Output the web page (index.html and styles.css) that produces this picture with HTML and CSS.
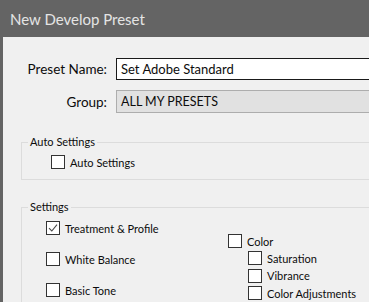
FILE: index.html
```html
<!DOCTYPE html>
<html>
<head>
<meta charset="utf-8">
<link rel="stylesheet" href="styles.css">
</head>
<body>
<div class="window">
  <div class="titlebar">New Develop Preset</div>
  <div class="content">
    <div class="form-grid">
      <label class="form-label">Preset Name:</label>
      <div class="text-input">Set Adobe Standard</div>
      <label class="form-label">Group:</label>
      <div class="select-input">ALL MY PRESETS</div>
    </div>

    <fieldset class="group group-auto">
      <legend class="group-legend">Auto Settings</legend>
      <div class="check-row">
        <span class="check-box"></span><span class="check-text">Auto Settings</span>
      </div>
    </fieldset>

    <fieldset class="group group-settings">
      <legend class="group-legend">Settings</legend>
      <div class="settings-cols">
        <div class="col-left">
          <div class="check-row">
            <span class="check-box checked"><svg viewBox="0 0 14 14" width="14" height="14"><path d="M3 7.2 L5.8 10 L11 3.6" fill="none" stroke="#4a4a4a" stroke-width="1.1"/></svg></span><span class="check-text">Treatment &amp; Profile</span>
          </div>
          <div class="check-row">
            <span class="check-box"></span><span class="check-text">White Balance</span>
          </div>
          <div class="check-row">
            <span class="check-box"></span><span class="check-text">Basic Tone</span>
          </div>
        </div>
        <div class="col-right">
          <div class="check-row">
            <span class="check-box"></span><span class="check-text">Color</span>
          </div>
          <div class="sub-list">
            <div class="check-row">
              <span class="check-box"></span><span class="check-text">Saturation</span>
            </div>
            <div class="check-row">
              <span class="check-box"></span><span class="check-text">Vibrance</span>
            </div>
            <div class="check-row">
              <span class="check-box"></span><span class="check-text">Color Adjustments</span>
            </div>
          </div>
        </div>
      </div>
    </fieldset>
  </div>
</div>
</body>
</html>
```

FILE: styles.css
```css
html, body {
  margin: 0;
  padding: 0;
  width: 369px;
  height: 302px;
  overflow: hidden;
  background: #f0f0f0;
}
body {
  font-family: "Lato", "Open Sans", sans-serif;
  color: #111;
}
.window {
  display: flex;
  flex-direction: column;
  height: 302px;
  overflow: hidden;
  border-left: 3px solid #646464;
  box-sizing: border-box;
}
.titlebar {
  height: 37px;
  background: #646464;
  color: #e4e4e4;
  font-size: 15px;
  line-height: 38px;
  margin-left: -3px;
  padding-left: 10px;
  box-sizing: border-box;
}
.content {
  flex: 1;
  background: #f0f0f0;
  padding-top: 21px;
}
.form-grid {
  display: grid;
  grid-template-columns: 104px 400px;
  column-gap: 9px;
  row-gap: 10px;
  align-items: center;
}
.form-label {
  text-align: right;
  font-size: 13.5px;
  color: #0c0c0c;
}
.text-input {
  height: 22px;
  box-sizing: border-box;
  border: 1px solid #1a1a1a;
  background: #fff;
  font-size: 13px;
  line-height: 20px;
  padding-left: 4px;
  color: #0c0c0c;
}
.select-input {
  height: 23px;
  box-sizing: border-box;
  border: 1px solid #adadad;
  background: #e1e1e1;
  font-size: 12.5px;
  line-height: 21px;
  padding-left: 4px;
  color: #0c0c0c;
}
.group {
  margin: 0 -100px 0 18px;
  padding: 0;
  border: 1px solid #dcdcdc;
  min-width: 0;
}
.group-legend {
  font-size: 11px;
  line-height: 16px;
  padding: 0 2px;
  margin-left: 6px;
  color: #0c0c0c;
}
.group-auto {
  margin-top: 21px;
  padding-bottom: 10px;
}
.group-auto .check-row {
  margin-top: 5px;
  margin-left: 29px;
}
.group-settings {
  margin-top: 19px;
  padding-bottom: 20px;
}
.check-row {
  display: flex;
  align-items: center;
  height: 14px;
  gap: 5px;
}
.check-box {
  width: 14px;
  height: 14px;
  box-sizing: border-box;
  border: 1px solid #333;
  background: #fff;
  flex: none;
  display: block;
}
.check-box svg {
  display: block;
  margin: -1px;
}
.check-text {
  font-size: 11px;
  color: #0c0c0c;
  white-space: nowrap;
}
.settings-cols {
  display: flex;
  padding-top: 6px;
}
.col-left {
  display: flex;
  flex-direction: column;
  gap: 17px;
  margin-left: 24px;
  width: 182px;
  flex: none;
}
.col-right {
  display: flex;
  flex-direction: column;
  padding-top: 13px;
  gap: 3px;
}
.sub-list {
  display: flex;
  flex-direction: column;
  gap: 3.5px;
  margin-left: 20px;
}
```
